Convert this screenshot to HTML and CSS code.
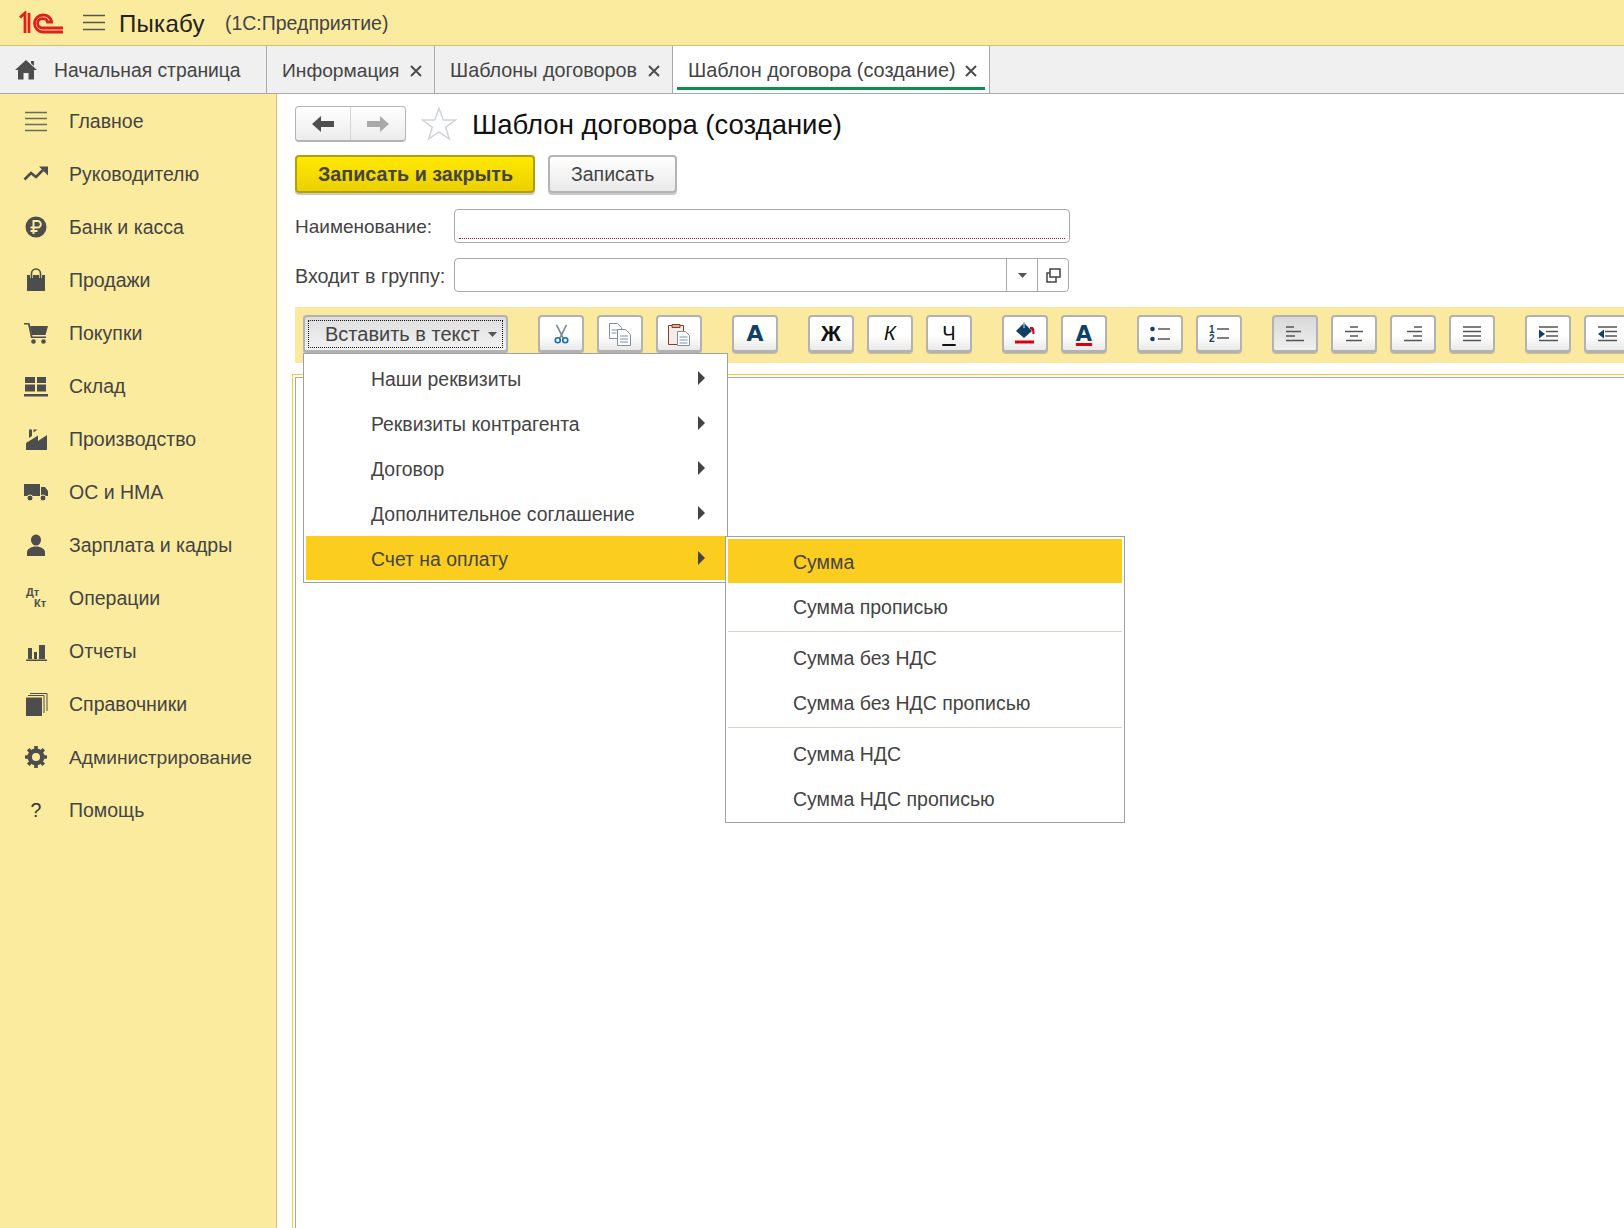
FILE: index.html
```html
<!DOCTYPE html>
<html lang="ru">
<head>
    <meta charset="UTF-8">
    <meta name="viewport" content="width=device-width, initial-scale=1.0">
    <title>Шаблон договора (создание)</title>
    <link rel="stylesheet" href="styles.css">
</head>
<body>

<div class="app">
    <!-- Шапка -->
    <header class="topbar">
        <svg class="logo" width="46" height="24" viewBox="0 0 46 24" fill="none" stroke="#e0201b" stroke-width="2.800">
            <path d="M1 6.500 6 2v20M10 2v20"/>
            <path d="M44 21H24a8.500 8.500 0 1 1 0-17c4.500 0 7.500 2.500 8.500 6.500"/>
            <path d="M44 17H24a4.700 4.700 0 1 1 0-9.300c2.500 0 4 1.300 4.500 3.300H34"/>
        </svg>
        <svg class="burger" width="22" height="17" viewBox="0 0 22 17" fill="none" stroke="#555" stroke-width="1.500">
            <path d="M0 1.500h22M0 8.500h22M0 15.500h22"/>
        </svg>
        <span class="app-name">Пыкабу</span>
        <span class="app-platform">(1С:Предприятие)</span>
    </header>

    <!-- Вкладки -->
    <nav class="tabs">
        <div class="tab tab-home">
            <svg width="22" height="20" viewBox="0 0 22 20" fill="#4d4d4d">
                <path d="M11 0 22 10h-3v9.500h-5.500V13h-5v6.500H3V10H0zM16 1h3v5l-3-2.700z"/>
            </svg>
            <span>Начальная страница</span>
        </div>
        <div class="tab tab-info">
            <span>Информация</span>
            <svg class="tab-close" width="12" height="12" viewBox="0 0 12 12"><path d="M1 1l10 10M11 1 1 11"/></svg>
        </div>
        <div class="tab tab-templates">
            <span>Шаблоны договоров</span>
            <svg class="tab-close" width="12" height="12" viewBox="0 0 12 12"><path d="M1 1l10 10M11 1 1 11"/></svg>
        </div>
        <div class="tab tab-active">
            <span>Шаблон договора (создание)</span>
            <svg class="tab-close" width="12" height="12" viewBox="0 0 12 12"><path d="M1 1l10 10M11 1 1 11"/></svg>
        </div>
    </nav>

    <div class="workspace">
        <!-- Боковое меню -->
        <aside class="sidebar">
            <a class="side-item">
                <svg class="side-icon" viewBox="0 0 26 26" fill="none" stroke="#6a6a5a" stroke-width="1.500"><path d="M2 4.500h22M2 10.500h22M2 16.500h22M2 22.500h22"/></svg>
                Главное
            </a>
            <a class="side-item">
                <svg class="side-icon" viewBox="0 0 26 26"><path d="M1.500 18.500 8 12l5 4 7-7" fill="none" stroke="#4d4d4d" stroke-width="2.600"/><path d="M16 5.500h9v9z" fill="#4d4d4d"/></svg>
                Руководителю
            </a>
            <a class="side-item">
                <svg class="side-icon" viewBox="0 0 26 26"><circle cx="13" cy="13" r="10.500" fill="#4d4d4d"/><path d="M10.500 20V7h4a3.300 3.300 0 0 1 0 6.600H7.500M7.500 17h7" fill="none" stroke="#fbeb9e" stroke-width="2"/></svg>
                Банк и касса
            </a>
            <a class="side-item">
                <svg class="side-icon" viewBox="0 0 26 26"><path d="M4 8h3v3h3V8h6v3h3V8h3v16H4z" fill="#4d4d4d"/><path d="M8.500 11V6.500a4.500 4.500 0 0 1 9 0V11" fill="none" stroke="#4d4d4d" stroke-width="1.600"/></svg>
                Продажи
            </a>
            <a class="side-item">
                <svg class="side-icon" viewBox="0 0 26 26" fill="#4d4d4d"><path d="M1 3h5.500l3 13.500H23V18H8L5 4.600H1z"/><path d="M7 6h18l-2.500 9H9z"/><circle cx="10.500" cy="21.500" r="2.300"/><circle cx="20.500" cy="21.500" r="2.300"/></svg>
                Покупки
            </a>
            <a class="side-item">
                <svg class="side-icon" viewBox="0 0 26 26" fill="#4d4d4d"><path d="M2 4h10v6H2zM14 4h9v6h-9zM2 11.500h10v7H2zM14 11.500h9v7h-9zM1 21h24v2.500H1z"/></svg>
                Склад
            </a>
            <a class="side-item">
                <svg class="side-icon" viewBox="0 0 26 26" fill="#4d4d4d"><path d="M3 24V17L15 9.500V15L24 9V24ZM6 3.500h3V10l-3 2zM10.500 3.500h4l-4 3z"/></svg>
                Производство
            </a>
            <a class="side-item">
                <svg class="side-icon" viewBox="0 0 26 26" fill="#4d4d4d"><path d="M1 5h16v12H1zM18 8h4l3 4v5h-7z"/><circle cx="7" cy="19" r="3" stroke="#fbeb9e"/><circle cx="20" cy="19" r="3" stroke="#fbeb9e"/></svg>
                ОС и НМА
            </a>
            <a class="side-item">
                <svg class="side-icon" viewBox="0 0 26 26" fill="#4d4d4d"><ellipse cx="13" cy="8" rx="5" ry="5.500"/><path d="M4 24v-4c0-3 4-5.500 9-5.500s9 2.500 9 5.500v4z"/></svg>
                Зарплата и кадры
            </a>
            <a class="side-item">
                <span class="side-icon dt-kt"><span>Дт</span><span class="kt">Кт</span></span>
                Операции
            </a>
            <a class="side-item">
                <svg class="side-icon" viewBox="0 0 26 26" fill="#4d4d4d"><path d="M5 10h4v11H5zM11 14h3v7h-3zM16 7h6v14h-6zM3 21.500h21V23H3z"/></svg>
                Отчеты
            </a>
            <a class="side-item">
                <svg class="side-icon" viewBox="0 0 26 26"><path d="M3 6.500h16V25H3z" fill="#4d4d4d"/><path d="M5 4.500h16V22M7 2.500h17V20" fill="none" stroke="#4d4d4d" stroke-width="1"/></svg>
                Справочники
            </a>
            <a class="side-item side-item-admin">
                <svg class="side-icon" viewBox="0 0 26 26"><circle cx="13" cy="13" r="6.500" fill="none" stroke="#4d4d4d" stroke-width="4"/><path d="M13 2v22M2 13h22M5.200 5.200l15.600 15.600M20.800 5.200 5.200 20.800" stroke="#4d4d4d" stroke-width="3.600"/><circle cx="13" cy="13" r="4" fill="#fbeb9e"/></svg>
                Администрирование
            </a>
            <a class="side-item">
                <span class="side-icon help">?</span>
                Помощь
            </a>
        </aside>

        <!-- Форма -->
        <main class="form">
            <div class="title-row">
                <div class="nav-buttons">
                    <div class="nav-btn">
                        <svg width="22" height="16" viewBox="0 0 22 16" fill="#4f4f4f"><path d="M0 8 9 0v5h13v6H9v5z"/></svg>
                    </div>
                    <div class="nav-btn">
                        <svg width="22" height="16" viewBox="0 0 22 16" fill="#a9a9a9"><path d="M22 8 13 0v5H0v6h13v5z"/></svg>
                    </div>
                </div>
                <svg class="star" width="36" height="34" viewBox="0 0 36 34" fill="#fff" stroke="#cfd3d6" stroke-width="1.500">
                    <path d="M18 1.500 22.300 13H34.500l-9.800 7.300L28.300 32 18 25l-10.300 7 3.600-11.700L1.500 13h12.200z"/>
                </svg>
                <h1 class="form-title">Шаблон договора (создание)</h1>
            </div>

            <div class="command-row">
                <button class="btn btn-primary">Записать и закрыть</button>
                <button class="btn">Записать</button>
            </div>

            <div class="field-row field-name">
                <label>Наименование:</label>
                <div class="input input-required"></div>
            </div>
            <div class="field-row field-group">
                <label>Входит в группу:</label>
                <div class="input input-select">
                    <div class="input-text"></div>
                    <div class="input-part">
                        <svg width="9" height="5" viewBox="0 0 9 5" fill="#555"><path d="M0 0h9L4.500 5z"/></svg>
                    </div>
                    <div class="input-part">
                        <svg width="15" height="15" viewBox="0 0 15 15" fill="none" stroke="#444" stroke-width="1.500"><path d="M4 1h10v8H4zM4 5H1v9h9v-5"/></svg>
                    </div>
                </div>
            </div>

            <div class="editor-area">
                <div class="toolbar">
                    <div class="tool tool-insert">
                        <span class="tool-insert-inner">
                            Вставить в текст
                            <svg width="9" height="5" viewBox="0 0 9 5" fill="#555"><path d="M0 0h9L4.500 5z"/></svg>
                        </span>
                    </div>
                    <div class="tool-group">
                        <div class="tool">
                            <svg width="15" height="20" viewBox="0 0 18 24" fill="none"><path d="M3 1l8 16M15 1 7 17" stroke="#7d8a94" stroke-width="2"/><circle cx="4.500" cy="19.500" r="3" stroke="#1b6fa8" stroke-width="2"/><circle cx="13.500" cy="19.500" r="3" stroke="#1b6fa8" stroke-width="2"/></svg>
                        </div>
                        <div class="tool">
                            <svg width="24" height="24" viewBox="0 0 24 24" fill="#fff" stroke="#7f909f"><path d="M1.500 1.500h8l4 4v11h-12z"/><path d="M9.500 7.500h8l5 5v11h-13z"/><path d="M3.500 8h6M3.500 11h5M12 14h8M12 17h8M12 20h8"/></svg>
                        </div>
                        <div class="tool">
                            <svg width="24" height="24" viewBox="0 0 24 24" fill="#fff"><path d="M1.500 3.500h15v19h-15z" fill="#f3ece6" stroke="#8f3d22"/><path d="M5 2.500h8v3H5z" fill="#c9b6a8" stroke="#8f3d22"/><path d="M10.500 9.500h8l4 4v10h-12z" stroke="#7f909f"/><path d="M12.500 15h8M12.500 18h8M12.500 21h8" stroke="#7f909f"/></svg>
                        </div>
                    </div>
                    <div class="tool-group">
                        <div class="tool tool-letter tool-a">A</div>
                    </div>
                    <div class="tool-group">
                        <div class="tool tool-letter tool-bold">Ж</div>
                        <div class="tool tool-letter tool-italic">К</div>
                        <div class="tool tool-letter tool-under">Ч</div>
                    </div>
                    <div class="tool-group">
                        <div class="tool">
                            <svg width="20" height="24" viewBox="0 0 20 24"><path d="M9 1 17 9 9 16 1 9z" fill="#123f66"/><path d="M9 0v6" stroke="#9fb2c2" stroke-width="1.500"/><path d="M15 5h2c2 0 2.500 2 2.500 7h-2c0-3-.5-4.500-2.500-5z" fill="#d9000d"/><path d="M0 18.500h19v3H0z" fill="#d9000d"/></svg>
                        </div>
                        <div class="tool tool-letter tool-color">A</div>
                    </div>
                    <div class="tool-group">
                        <div class="tool">
                            <svg width="20" height="16" viewBox="0 0 20 16"><circle cx="2.500" cy="3" r="2.300" fill="#123f66"/><circle cx="2.500" cy="13" r="2.300" fill="#123f66"/><path d="M8 3h12M8 13h12" stroke="#555" stroke-width="1.600"/></svg>
                        </div>
                        <div class="tool">
                            <svg class="num-list" width="20" height="20" viewBox="0 0 20 20"><text x="0" y="9">1</text><text x="0" y="18">2</text><path d="M8 5h12M8 14h12" stroke="#555" stroke-width="1.600"/></svg>
                        </div>
                    </div>
                    <div class="tool-group">
                        <div class="tool tool-active">
                            <svg class="lines" width="18" height="16" viewBox="0 0 18 16"><path d="M0 1h8M0 5.500h15M0 10h9M0 14.500h18"/></svg>
                        </div>
                        <div class="tool">
                            <svg class="lines" width="18" height="16" viewBox="0 0 18 16"><path d="M5 1h8M0 5.500h18M5 10h8M1 14.500h16"/></svg>
                        </div>
                        <div class="tool">
                            <svg class="lines" width="18" height="16" viewBox="0 0 18 16"><path d="M10 1h8M3 5.500h15M9 10h9M0 14.500h18"/></svg>
                        </div>
                        <div class="tool">
                            <svg class="lines" width="18" height="16" viewBox="0 0 18 16"><path d="M0 1h18M0 5.500h18M0 10h18M0 14.500h18"/></svg>
                        </div>
                    </div>
                    <div class="tool-group">
                        <div class="tool">
                            <svg class="lines" width="19" height="16" viewBox="0 0 19 16"><path d="M0 1h19M7 5.500h12M7 10h12M0 14.500h19"/><path d="M0 3.500 6 8l-6 4.500z" fill="#123f66" stroke="none"/></svg>
                        </div>
                        <div class="tool">
                            <svg class="lines" width="19" height="16" viewBox="0 0 19 16"><path d="M0 1h19M7 5.500h12M7 10h12M0 14.500h19"/><path d="M6 3.500 0 8l6 4.500z" fill="#123f66" stroke="none"/></svg>
                        </div>
                    </div>
                </div>

                <!-- Открытое меню -->
                <div class="menu menu-main">
                    <div class="menu-item">Наши реквизиты<i class="menu-arrow"></i></div>
                    <div class="menu-item">Реквизиты контрагента<i class="menu-arrow"></i></div>
                    <div class="menu-item">Договор<i class="menu-arrow"></i></div>
                    <div class="menu-item">Дополнительное соглашение<i class="menu-arrow"></i></div>
                    <div class="menu-item menu-item-active">Счет на оплату<i class="menu-arrow"></i></div>
                </div>
                <div class="menu menu-sub">
                    <div class="menu-item menu-item-active">Сумма</div>
                    <div class="menu-item">Сумма прописью</div>
                    <div class="menu-sep"></div>
                    <div class="menu-item">Сумма без НДС</div>
                    <div class="menu-item">Сумма без НДС прописью</div>
                    <div class="menu-sep"></div>
                    <div class="menu-item">Сумма НДС</div>
                    <div class="menu-item">Сумма НДС прописью</div>
                </div>

                <div class="editor"><div class="editor-inner"></div></div>
            </div>
        </main>
    </div>
</div>

</body>
</html>
```

FILE: styles.css
```css
* {
    box-sizing: border-box;
}

body {
    margin: 0;
    font-family: "Liberation Sans", Arial, sans-serif;
    font-size: 19.500px;
    color: #444;
    background-color: #fff;
}

.app {
    display: flex;
    flex-direction: column;
    height: 100vh;
    overflow: hidden;
}

/* Шапка */
.topbar {
    display: flex;
    align-items: center;
    flex: none;
    height: 46px;
    padding-left: 19px;
    background-color: #fbeb9e;
    border-bottom: 1px solid #cdbf7c;
}

.burger {
    margin-left: 18px;
}

.app-name {
    margin-left: 14px;
    padding-top: 2px;
    font-size: 24px;
    letter-spacing: 0.3px;
    color: #222;
}

.app-platform {
    margin-left: 20px;
    padding-top: 2px;
    color: #444;
}

/* Вкладки */
.tabs {
    display: flex;
    flex: none;
    height: 48px;
    background-color: #f0f0f0;
    border-bottom: 1px solid #a9a9a9;
}

.tab {
    display: flex;
    align-items: center;
    position: relative;
    padding: 2px 12px 0 15px;
    border-right: 1px solid #a9a9a9;
    white-space: nowrap;
}

.tab-home {
    gap: 17px;
    width: 267px;
    font-size: 19.300px;
}

.tab-home svg {
    margin-top: -2px;
}

.tab-info {
    justify-content: space-between;
    width: 168px;
    font-size: 19.200px;
}

.tab-templates {
    justify-content: space-between;
    width: 238px;
    font-size: 19.800px;
}

.tab-active {
    justify-content: space-between;
    width: 317px;
    font-size: 19.900px;
    background-color: #fff;
}

/* Зелёная полоска активной вкладки */
.tab-active::after {
    content: "";
    position: absolute;
    left: 4px;
    right: 4px;
    bottom: 3px;
    height: 3px;
    background-color: #0b8f4d;
}

.tab-close {
    flex: none;
    fill: none;
    stroke: #4d4d4d;
    stroke-width: 2;
}

.workspace {
    display: flex;
    flex: 1;
    min-height: 0;
}

/* Боковое меню */
.sidebar {
    flex: none;
    width: 277px;
    background-color: #fbeb9e;
    border-right: 1px solid #cdbf7c;
}

.side-item {
    display: flex;
    align-items: center;
    gap: 20px;
    height: 53px;
    padding: 2px 0 0 23px;
    color: #444;
    white-space: nowrap;
}

.side-item-admin {
    font-size: 19.200px;
}

.side-icon {
    flex: none;
    width: 26px;
    height: 26px;
    margin-top: -2px;
}

.dt-kt {
    display: flex;
    flex-direction: column;
    justify-content: center;
    padding-left: 3px;
    font-size: 11px;
    font-weight: bold;
    line-height: 11px;
    color: #4d4d4d;
}

.kt {
    padding-left: 8px;
}

.help {
    text-align: center;
    line-height: 26px;
    color: #333;
}

/* Форма */
.form {
    flex: 1;
    min-width: 0;
    padding: 12px 0 0 18px;
    display: flex;
    flex-direction: column;
    overflow: hidden;
}

.title-row {
    display: flex;
    align-items: center;
    flex: none;
    height: 36px;
}

.nav-buttons {
    display: flex;
    width: 111px;
    height: 36px;
    border: 1px solid #b4b4b4;
    border-bottom-width: 2px;
    border-radius: 4px;
    background: linear-gradient(#fff, #ececec);
}

.nav-btn {
    display: flex;
    align-items: center;
    justify-content: center;
    flex: 1;
}

.nav-btn + .nav-btn {
    border-left: 1px solid #d4d4d4;
}

.star {
    margin-left: 15px;
}

.form-title {
    margin: 0 0 0 15px;
    padding-top: 2px;
    font-size: 27.500px;
    font-weight: normal;
    color: #111;
}

.command-row {
    display: flex;
    gap: 13px;
    flex: none;
    margin-top: 13px;
}

.btn {
    height: 38px;
    padding: 0 21px;
    font-family: inherit;
    font-size: 19.500px;
    color: #444;
    white-space: nowrap;
    background: linear-gradient(#fff, #e9e9e9);
    border: 2px solid #b4b4b4;
    border-radius: 4px;
    box-shadow: 0 2px 0 #c9c9c9;
}

.btn-primary {
    width: 240px;
    font-size: 19.700px;
    font-weight: bold;
    background: linear-gradient(#ffe900, #ecd000);
    border-color: #b39f0a;
}

.field-row {
    display: flex;
    align-items: center;
    flex: none;
    height: 34px;
}

.field-name {
    margin-top: 16px;
    font-size: 19px;
}

.field-group {
    margin-top: 15px;
    font-size: 19.700px;
}

.field-row label {
    flex: none;
    width: 159px;
    padding-top: 2px;
    white-space: nowrap;
}

.input {
    width: 616px;
    height: 34px;
    background-color: #fff;
    border: 1px solid #a9a9a9;
    border-radius: 4px;
}

.input-required {
    position: relative;
}

.input-required::after {
    content: "";
    position: absolute;
    left: 4px;
    right: 4px;
    bottom: 3px;
    border-bottom: 1px dotted #c8101a;
}

.input-select {
    display: flex;
    width: 615px;
}

.input-text {
    flex: 1;
}

.input-part {
    display: flex;
    align-items: center;
    justify-content: center;
    flex: none;
    width: 31px;
    border-left: 1px solid #a9a9a9;
}

/* Панель редактора */
.editor-area {
    display: flex;
    flex-direction: column;
    flex: 1;
    min-height: 0;
    position: relative;
    margin-top: 15px;
}

.toolbar {
    display: flex;
    gap: 30px;
    flex: none;
    height: 56px;
    padding: 8px 0 0 8px;
    background-color: #fbe9a0;
}

.tool-group {
    display: flex;
    gap: 13px;
    flex: none;
}

.tool {
    display: flex;
    align-items: center;
    justify-content: center;
    flex: none;
    width: 46px;
    height: 38px;
    background: linear-gradient(#fff 55%, #e9e9e9);
    border: 2px solid #b2b2b2;
    border-bottom-width: 3px;
    border-radius: 4px;
    box-shadow: 0 1px 0 #c9bd8a;
}

.tool-active {
    background: linear-gradient(#d8d8d8, #efefef);
}

.tool-insert {
    width: 205px;
    font-size: 20px;
    background: linear-gradient(#dedede, #f2f2f2);
}

.tool-insert-inner {
    display: flex;
    align-items: center;
    justify-content: space-between;
    width: 195px;
    height: 28px;
    padding: 2px 5px 0 16px;
    border: 1px dotted #111;
}

.tool-letter {
    font-size: 20px;
    color: #111;
}

.tool-a,
.tool-color {
    font-family: "DejaVu Sans", sans-serif;
    font-size: 22px;
    font-weight: bold;
    color: #123f66;
}

.tool-color {
    font-size: 21px;
    line-height: 22px;
    text-decoration: underline 3px #d9000d;
    text-underline-offset: 2px;
}

.tool-bold {
    font-size: 22px;
    font-weight: bold;
}

.tool-italic {
    font-style: italic;
}

.tool-under {
    text-decoration: underline;
    text-underline-offset: 4px;
}

.lines {
    fill: none;
    stroke: #555;
    stroke-width: 1.600;
}

.num-list text {
    font-size: 10px;
    font-weight: bold;
    fill: #123f66;
}

.editor {
    flex: 1;
    margin: 11px 0 0 -3px;
    padding: 2px 0 0 2px;
    border-top: 1px solid #fbcd1f;
    border-left: 1px solid #fbcd1f;
}

.editor-inner {
    height: 100%;
    border-top: 1px solid #a9a9a9;
    border-left: 1px solid #a9a9a9;
}

/* Меню */
.menu {
    position: absolute;
    padding: 2px;
    background-color: #fff;
    border: 1px solid #a0a0a0;
    white-space: nowrap;
}

.menu-main {
    left: 8px;
    top: 46px;
    width: 425px;
    height: 230px;
    font-size: 19.400px;
}

.menu-sub {
    left: 430px;
    top: 229px;
    width: 400px;
    height: 287px;
}

.menu-item {
    display: flex;
    align-items: center;
    justify-content: space-between;
    height: 44px;
    margin-bottom: 1px;
    padding: 2px 20px 0 65px;
}

.menu-item-active {
    background-color: #fbcd1f;
}

.menu-arrow {
    margin-top: -2px;
    border-left: 7px solid #444;
    border-top: 7px solid transparent;
    border-bottom: 7px solid transparent;
}

.menu-sep {
    height: 6px;
    padding-top: 2px;
}

.menu-sep::before {
    content: "";
    display: block;
    border-top: 1px solid #d8d5c6;
}
```
